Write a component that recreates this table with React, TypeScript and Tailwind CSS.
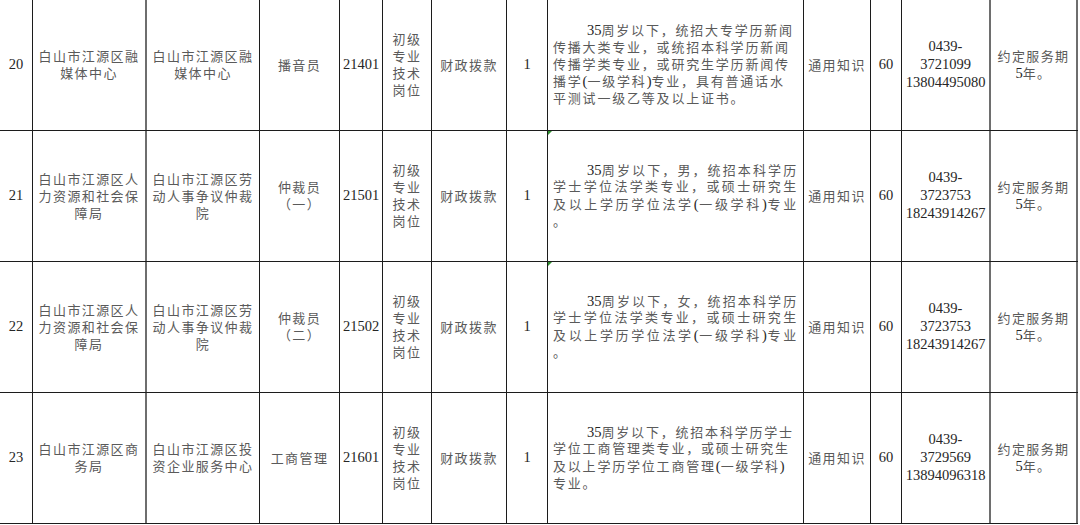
import React from 'react';

type Line = { text: React.ReactNode; indent?: boolean; justify?: boolean };

interface Row {
  no: string;
  unit: string[];
  dept: string[];
  post: string[];
  code: string;
  desc: Line[];
  mark?: boolean;
  phone: string[];
}

const N = ({ children }: { children: React.ReactNode }) => (
  <span className="text-[14.5px] tracking-normal text-[#262626]">{children}</span>
);

const rows: Row[] = [
  {
    no: '20',
    unit: ['白山市江源区融', '媒体中心'],
    dept: ['白山市江源区融', '媒体中心'],
    post: ['播音员'],
    code: '21401',
    desc: [
      { text: <><N>35</N>周岁以下，统招大专学历新闻</>, indent: true },
      { text: '传播大类专业，或统招本科学历新闻' },
      { text: '传播学类专业，或研究生学历新闻传' },
      { text: <>播学<N>(</N>一级学科<N>)</N>专业，具有普通话水</> },
      { text: '平测试一级乙等及以上证书。' },
    ],
    phone: ['0439-', '3721099', '13804495080'],
  },
  {
    no: '21',
    unit: ['白山市江源区人', '力资源和社会保', '障局'],
    dept: ['白山市江源区劳', '动人事争议仲裁', '院'],
    post: ['仲裁员', '（一）'],
    code: '21501',
    desc: [
      { text: <><N>35</N>周岁以下，男，统招本科学历</>, indent: true, justify: true },
      { text: '学士学位法学类专业，或硕士研究生', justify: true },
      { text: <>及以上学历学位法学<N>(</N>一级学科<N>)</N>专业</>, justify: true },
      { text: '。' },
    ],
    mark: true,
    phone: ['0439-', '3723753', '18243914267'],
  },
  {
    no: '22',
    unit: ['白山市江源区人', '力资源和社会保', '障局'],
    dept: ['白山市江源区劳', '动人事争议仲裁', '院'],
    post: ['仲裁员', '（二）'],
    code: '21502',
    desc: [
      { text: <><N>35</N>周岁以下，女，统招本科学历</>, indent: true, justify: true },
      { text: '学士学位法学类专业，或硕士研究生', justify: true },
      { text: <>及以上学历学位法学<N>(</N>一级学科<N>)</N>专业</>, justify: true },
      { text: '。' },
    ],
    mark: true,
    phone: ['0439-', '3723753', '18243914267'],
  },
  {
    no: '23',
    unit: ['白山市江源区商', '务局'],
    dept: ['白山市江源区投', '资企业服务中心'],
    post: ['工商管理'],
    code: '21601',
    desc: [
      { text: <><N>35</N>周岁以下，统招本科学历学士</>, indent: true },
      { text: '学位工商管理类专业，或硕士研究生' },
      { text: <>及以上学历学位工商管理<N>(</N>一级学科<N>)</N></> },
      { text: '专业。' },
    ],
    phone: ['0439-', '3729569', '13894096318'],
  },
];

const cell = 'flex flex-col items-center justify-center text-center border-r border-[#1c1c1c]';
const thick = 'flex flex-col items-center justify-center text-center border-r-2 border-[#6e6e6e]';

function Lines({ items }: { items: string[] }) {
  return (
    <>
      {items.map((t, i) => (
        <div key={i} className="whitespace-nowrap leading-[17px]">
          {t}
        </div>
      ))}
    </>
  );
}

export default function App() {
  return (
    <div
      className="w-[1080px] h-[525px] bg-white overflow-hidden text-[13px] tracking-[1.4px] text-[#5a5a5a]"
      style={{ fontFamily: '"Liberation Serif", "Noto Sans CJK SC", serif' }}
    >
      <div className="w-[1078px]">
        {rows.map((r) => (
          <div
            key={r.no}
            className="grid grid-cols-[33px_114px_113px_80px_43px_49px_75px_41px_256px_67px_31px_89px_87px] h-[131px] border-b border-[#1c1c1c]"
          >
            <div className={cell}>
              <N>{r.no}</N>
            </div>
            <div className={thick}>
              <Lines items={r.unit} />
            </div>
            <div className={cell}>
              <Lines items={r.dept} />
            </div>
            <div className={cell}>
              <Lines items={r.post} />
            </div>
            <div className={cell}>
              <N>{r.code}</N>
            </div>
            <div className={cell}>
              <Lines items={['初级', '专业', '技术', '岗位']} />
            </div>
            <div className={cell}>
              <Lines items={['财政拨款']} />
            </div>
            <div className={cell}>
              <N>1</N>
            </div>
            <div className="relative flex flex-col justify-center pl-[5px] pr-[5px] border-r border-[#1c1c1c] tracking-[1.8px]">
              {r.mark && (
                <div className="absolute left-0 top-0 w-0 h-0 border-t-[4px] border-r-[4px] border-t-[#2f8f2f] border-r-transparent" />
              )}
              {r.desc.map((l, i) => (
                <div
                  key={i}
                  className={`whitespace-nowrap leading-[16.7px] ${l.indent ? 'pl-[34px]' : ''} ${
                    l.justify ? 'w-[245px] text-justify [text-align-last:justify]' : ''
                  }`}
                >
                  {l.text}
                </div>
              ))}
            </div>
            <div className={cell}>
              <Lines items={['通用知识']} />
            </div>
            <div className={cell}>
              <N>60</N>
            </div>
            <div className={thick}>
              {r.phone.map((p, i) => (
                <div key={i} className="leading-[16.7px]">
                  <N>{p}</N>
                </div>
              ))}
            </div>
            <div className={thick}>
              <div className="leading-[17px] whitespace-nowrap">约定服务期</div>
              <div className="leading-[17px]">
                <N>5</N>年。
              </div>
            </div>
          </div>
        ))}
      </div>
    </div>
  );
}
